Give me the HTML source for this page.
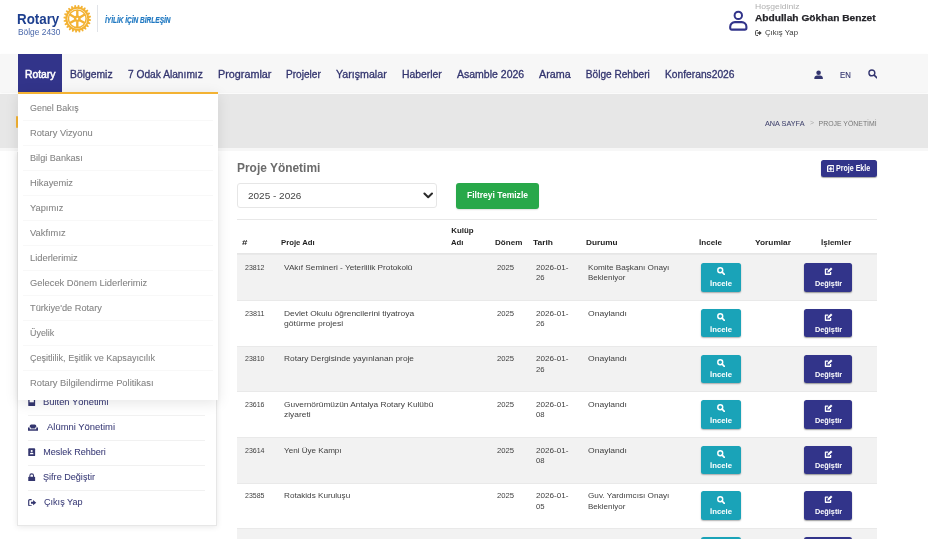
<!DOCTYPE html>
<html lang="tr"><head><meta charset="utf-8"><title>Proje Yönetimi</title>
<style>
html,body{margin:0;padding:0;}
body{width:928px;height:539px;overflow:hidden;background:#fff;position:relative;font-family:"Liberation Sans", sans-serif;}
.t{position:absolute;white-space:pre;z-index:5;transform-origin:0 50%;}
.sb{z-index:2;}
.b{position:absolute;}
#page{position:absolute;left:0;top:0;width:928px;height:539px;overflow:hidden;will-change:transform;}
</style></head>
<body>
<div id="page">
<div class="b" style="left:0px;top:54px;width:928px;height:38px;background:#f7f7f7;box-shadow:0 1px 2px rgba(0,0,0,.06);"></div>
<div class="b" style="left:0px;top:94px;width:928px;height:54px;background:#e7e7e7;"></div>
<div class="b" style="left:0px;top:148px;width:928px;height:3px;background:#f7f7f7;"></div>
<div class="b" style="left:18px;top:54px;width:44px;height:38px;background:#32348a;"></div>
<div class="b" style="left:16px;top:116px;width:2.2px;height:12px;background:#f3b233;border-radius:1px;"></div>
<svg class="b" style="left:0;top:0" width="120" height="45" viewBox="0 0 120 45">
<path d="M89.17,18.80 L91.08,19.45 L90.96,20.78 L88.95,21.05 L88.76,21.87 L90.45,23.00 L89.98,24.25 L87.97,23.99 L87.58,24.73 L88.91,26.26 L88.14,27.34 L86.26,26.58 L85.69,27.19 L86.59,29.01 L85.56,29.86 L83.95,28.63 L83.23,29.08 L83.63,31.06 L82.41,31.62 L81.17,30.02 L80.37,30.26 L80.24,32.28 L78.92,32.50 L78.14,30.64 L77.30,30.67 L76.65,32.58 L75.32,32.46 L75.05,30.45 L74.23,30.26 L73.10,31.95 L71.85,31.48 L72.11,29.47 L71.37,29.08 L69.84,30.41 L68.76,29.64 L69.52,27.76 L68.91,27.19 L67.09,28.09 L66.24,27.06 L67.47,25.45 L67.02,24.73 L65.04,25.13 L64.48,23.91 L66.08,22.67 L65.84,21.87 L63.82,21.74 L63.60,20.42 L65.46,19.64 L65.43,18.80 L63.52,18.15 L63.64,16.82 L65.65,16.55 L65.84,15.73 L64.15,14.60 L64.62,13.35 L66.63,13.61 L67.02,12.87 L65.69,11.34 L66.46,10.26 L68.34,11.02 L68.91,10.41 L68.01,8.59 L69.04,7.74 L70.65,8.97 L71.37,8.52 L70.97,6.54 L72.19,5.98 L73.43,7.58 L74.23,7.34 L74.36,5.32 L75.68,5.10 L76.46,6.96 L77.30,6.93 L77.95,5.02 L79.28,5.14 L79.55,7.15 L80.37,7.34 L81.50,5.65 L82.75,6.12 L82.49,8.13 L83.23,8.52 L84.76,7.19 L85.84,7.96 L85.08,9.84 L85.69,10.41 L87.51,9.51 L88.36,10.54 L87.13,12.15 L87.58,12.87 L89.56,12.47 L90.12,13.69 L88.52,14.93 L88.76,15.73 L90.78,15.86 L91.00,17.18 L89.14,17.96Z" fill="#f3b233"/>
<circle cx="77.3" cy="18.8" r="9.94" fill="#fff"/>
<circle cx="77.3" cy="18.8" r="8.83" fill="none" stroke="#f3b233" stroke-width="1.52"/>
<line x1="79.69" y1="20.18" x2="84.71" y2="23.08" stroke="#f3b233" stroke-width="2.35"/><line x1="77.30" y1="21.56" x2="77.30" y2="27.36" stroke="#f3b233" stroke-width="2.35"/><line x1="74.91" y1="20.18" x2="69.89" y2="23.08" stroke="#f3b233" stroke-width="2.35"/><line x1="74.91" y1="17.42" x2="69.89" y2="14.52" stroke="#f3b233" stroke-width="2.35"/><line x1="77.30" y1="16.04" x2="77.30" y2="10.24" stroke="#f3b233" stroke-width="2.35"/><line x1="79.69" y1="17.42" x2="84.71" y2="14.52" stroke="#f3b233" stroke-width="2.35"/>
<circle cx="77.3" cy="18.8" r="3.31" fill="#f3b233"/>
<circle cx="77.3" cy="18.8" r="0.97" fill="#fff"/>
</svg>
<div class="b" style="left:97.3px;top:4.8px;width:1px;height:27.4px;background:#e0e3e8;"></div>
<svg class="b" style="left:727px;top:9px;" width="24" height="24" viewBox="0 0 24 24"><circle cx="11.3" cy="6.4" r="3.7" fill="none" stroke="#32348a" stroke-width="2"/><path d="M3.2 19v-1.200c0-2.700 2.100-4.700 4.700-4.700h6.800c2.600 0 4.700 2 4.700 4.700v1.200c0 .9-.7 1.600-1.600 1.600H4.800c-.9 0-1.600-.7-1.600-1.600z" fill="none" stroke="#32348a" stroke-width="2.100" stroke-linejoin="round"/></svg>
<svg class="b" style="left:755.2px;top:30px;" width="7" height="6" viewBox="0 0 16 14"><path d="M6 1.2H3.2a2 2 0 0 0-2 2v7.6a2 2 0 0 0 2 2H6" fill="none" stroke="#3a3a3a" stroke-width="2.2" stroke-linecap="round"/><path d="M5.5 5h4V2l6 5-6 5V9h-4z" fill="#3a3a3a"/></svg>
<svg class="b" style="left:813.6px;top:69.8px;" width="9.2" height="9.4" viewBox="0 0 16 16"><circle cx="8" cy="4.6" r="4" fill="#33356f"/><path d="M0.6 16v-2.2c0-2.6 2.2-4.3 4.6-4.3h5.6c2.4 0 4.6 1.7 4.6 4.3V16z" fill="#33356f"/></svg>
<svg class="b" style="left:867.8px;top:69.3px;" width="9.6" height="9.6" viewBox="0 0 16 16"><circle cx="6.5" cy="6.5" r="4.9" fill="none" stroke="#33356f" stroke-width="2.4"/><line x1="10.3" y1="10.3" x2="14.6" y2="14.6" stroke="#33356f" stroke-width="2.8" stroke-linecap="round"/></svg>
<div class="b" style="left:16.8px;top:152px;width:198px;height:372px;background:#fff;z-index:1;border:1px solid #e7e7e7;box-shadow:0 1px 6px rgba(0,0,0,.09);"></div>
<div class="b" style="left:28px;top:415px;width:177px;height:1px;background:#f1f1f1;z-index:2;"></div>
<div class="b" style="left:28px;top:440px;width:177px;height:1px;background:#f1f1f1;z-index:2;"></div>
<div class="b" style="left:28px;top:465px;width:177px;height:1px;background:#f1f1f1;z-index:2;"></div>
<div class="b" style="left:28px;top:490px;width:177px;height:1px;background:#f1f1f1;z-index:2;"></div>
<svg class="b" style="left:28.2px;top:397.8px;z-index:2;" width="7.4" height="8.6" viewBox="0 0 14 16"><rect x="0.5" y="0.500" width="13" height="15" rx="1.500" fill="#34366f"/><rect x="3" y="3" width="8" height="5" fill="#fff"/></svg>
<svg class="b" style="left:28.2px;top:423.6px;z-index:2;" width="10" height="7.2" viewBox="0 0 20 14"><path d="M3.5 6V4a3 3 0 0 1 3-3h7a3 3 0 0 1 3 3v2a2.2 2.2 0 0 0-2 2.2V9h-9v-.8a2.2 2.2 0 0 0-2-2.2z" fill="#34366f"/><path d="M0 8.2a1.8 1.8 0 0 1 3.600 0V10.500h12.800V8.200a1.800 1.800 0 0 1 3.600 0V13.500h-20z" fill="#34366f"/></svg>
<svg class="b" style="left:28.2px;top:447.9px;z-index:2;" width="7.4" height="8.6" viewBox="0 0 14 16"><rect x="0.5" y="0.5" width="13" height="15" rx="1.5" fill="#34366f"/><circle cx="7" cy="5.6" r="2" fill="#fff"/><path d="M3.5 11.5c0-2 1.5-2.8 3.5-2.8s3.5.8 3.5 2.8z" fill="#fff"/></svg>
<svg class="b" style="left:28.2px;top:472.8px;z-index:2;" width="7.4" height="8.6" viewBox="0 0 14 16"><rect x="0.5" y="7" width="13" height="9" rx="1.5" fill="#34366f"/><path d="M3.5 7.5V5a3.5 3.5 0 0 1 7 0v2.5" fill="none" stroke="#34366f" stroke-width="2"/></svg>
<svg class="b" style="left:28.2px;top:498.6px;z-index:2;" width="8.6" height="7.4" viewBox="0 0 16 14"><path d="M6 1.2H3.2a2 2 0 0 0-2 2v7.6a2 2 0 0 0 2 2H6" fill="none" stroke="#34366f" stroke-width="2.2" stroke-linecap="round"/><path d="M5.5 5h4V2l6 5-6 5V9h-4z" fill="#34366f"/></svg>
<div class="b" style="left:18px;top:92px;width:200px;height:308px;background:#fff;z-index:3;border-top:2px solid #f3b233;box-sizing:border-box;box-shadow:0 3px 13px rgba(0,0,0,.10);"></div>
<div class="b" style="left:23px;top:120px;width:190px;height:1px;background:#f8f8f8;z-index:4;"></div>
<div class="b" style="left:23px;top:145px;width:190px;height:1px;background:#f8f8f8;z-index:4;"></div>
<div class="b" style="left:23px;top:170px;width:190px;height:1px;background:#f8f8f8;z-index:4;"></div>
<div class="b" style="left:23px;top:195px;width:190px;height:1px;background:#f8f8f8;z-index:4;"></div>
<div class="b" style="left:23px;top:220px;width:190px;height:1px;background:#f8f8f8;z-index:4;"></div>
<div class="b" style="left:23px;top:245px;width:190px;height:1px;background:#f8f8f8;z-index:4;"></div>
<div class="b" style="left:23px;top:270px;width:190px;height:1px;background:#f8f8f8;z-index:4;"></div>
<div class="b" style="left:23px;top:295px;width:190px;height:1px;background:#f8f8f8;z-index:4;"></div>
<div class="b" style="left:23px;top:320px;width:190px;height:1px;background:#f8f8f8;z-index:4;"></div>
<div class="b" style="left:23px;top:345px;width:190px;height:1px;background:#f8f8f8;z-index:4;"></div>
<div class="b" style="left:23px;top:370px;width:190px;height:1px;background:#f8f8f8;z-index:4;"></div>
<div class="b" style="left:237px;top:183px;width:200px;height:25px;background:#fff;box-sizing:border-box;border:1px solid #e6e6e6;border-radius:3px;"></div>
<svg class="b" style="left:422.8px;top:192.4px;" width="10.4" height="7.6" viewBox="0 0 11 8"><path d="M1.500 1.600l4 4 4-4" fill="none" stroke="#2a2a2a" stroke-width="2.100" stroke-linecap="round" stroke-linejoin="round"/></svg>
<div class="b" style="left:456px;top:183px;width:83px;height:26px;background:#28a84a;border-radius:3px;box-shadow:0 1px 1.500px rgba(0,0,0,.12);"></div>
<div class="b" style="left:821.2px;top:160px;width:55.6px;height:17px;background:#32348a;border-radius:2.500px;box-shadow:0 1px 1px rgba(0,0,0,.35);"></div>
<svg class="b" style="left:826.8px;top:164.7px;" width="7.6" height="7.6" viewBox="0 0 16 16"><rect x="1.4" y="1.4" width="13.200" height="13.200" rx="2" fill="none" stroke="#fff" stroke-width="2.800"/><path d="M8 4v8M4 8h8" stroke="#fff" stroke-width="2.600"/></svg>
<div class="b" style="left:236.7px;top:219.4px;width:640px;height:1px;background:#e8e8e8;"></div>
<div class="b" style="left:236.7px;top:253.3px;width:640px;height:1px;background:#e6e6e6;"></div>
<div class="b" style="left:236.7px;top:254.30px;width:640px;height:45.65px;background:#f2f2f2;"></div>
<div class="b" style="left:236.7px;top:254.30px;width:640px;height:0.8px;background:#e9e9e9;"></div>
<div class="b" style="left:701.2px;top:263.20px;width:39.5px;height:28.6px;background:#1aa3b8;border-radius:2.500px;box-shadow:0 1px 1.500px rgba(0,0,0,.3);"></div>
<svg class="b" style="left:717.3px;top:267.30px;" width="8" height="8" viewBox="0 0 16 16"><circle cx="6.5" cy="6.5" r="4.9" fill="none" stroke="#fff" stroke-width="2.9"/><line x1="10.3" y1="10.3" x2="14.6" y2="14.6" stroke="#fff" stroke-width="3.3" stroke-linecap="round"/></svg>
<div class="b" style="left:804px;top:263.20px;width:47.6px;height:28.6px;background:#32348a;border-radius:2.500px;box-shadow:0 1px 1.500px rgba(0,0,0,.4);"></div>
<svg class="b" style="left:823.8px;top:267.20px;" width="9" height="8.4" viewBox="0 0 16 16"><path d="M12 9.500v4.300h-9.800v-9.800H7.500" fill="none" stroke="#fff" stroke-width="2.500" stroke-linejoin="round"/><path d="M5.800 10.600l.6-3.300 6.400-6.400 2.700 2.700-6.400 6.400z" fill="#fff"/></svg>
<div class="b" style="left:236.7px;top:299.95px;width:640px;height:0.8px;background:#e9e9e9;"></div>
<div class="b" style="left:701.2px;top:308.85px;width:39.5px;height:28.6px;background:#1aa3b8;border-radius:2.500px;box-shadow:0 1px 1.500px rgba(0,0,0,.3);"></div>
<svg class="b" style="left:717.3px;top:312.95px;" width="8" height="8" viewBox="0 0 16 16"><circle cx="6.5" cy="6.5" r="4.9" fill="none" stroke="#fff" stroke-width="2.9"/><line x1="10.3" y1="10.3" x2="14.6" y2="14.6" stroke="#fff" stroke-width="3.3" stroke-linecap="round"/></svg>
<div class="b" style="left:804px;top:308.85px;width:47.6px;height:28.6px;background:#32348a;border-radius:2.500px;box-shadow:0 1px 1.500px rgba(0,0,0,.4);"></div>
<svg class="b" style="left:823.8px;top:312.85px;" width="9" height="8.4" viewBox="0 0 16 16"><path d="M12 9.500v4.300h-9.800v-9.800H7.500" fill="none" stroke="#fff" stroke-width="2.500" stroke-linejoin="round"/><path d="M5.800 10.600l.6-3.300 6.400-6.400 2.700 2.700-6.400 6.400z" fill="#fff"/></svg>
<div class="b" style="left:236.7px;top:345.60px;width:640px;height:45.65px;background:#f2f2f2;"></div>
<div class="b" style="left:236.7px;top:345.60px;width:640px;height:0.8px;background:#e9e9e9;"></div>
<div class="b" style="left:701.2px;top:354.50px;width:39.5px;height:28.6px;background:#1aa3b8;border-radius:2.500px;box-shadow:0 1px 1.500px rgba(0,0,0,.3);"></div>
<svg class="b" style="left:717.3px;top:358.60px;" width="8" height="8" viewBox="0 0 16 16"><circle cx="6.5" cy="6.5" r="4.9" fill="none" stroke="#fff" stroke-width="2.9"/><line x1="10.3" y1="10.3" x2="14.6" y2="14.6" stroke="#fff" stroke-width="3.3" stroke-linecap="round"/></svg>
<div class="b" style="left:804px;top:354.50px;width:47.6px;height:28.6px;background:#32348a;border-radius:2.500px;box-shadow:0 1px 1.500px rgba(0,0,0,.4);"></div>
<svg class="b" style="left:823.8px;top:358.50px;" width="9" height="8.4" viewBox="0 0 16 16"><path d="M12 9.500v4.300h-9.800v-9.800H7.500" fill="none" stroke="#fff" stroke-width="2.500" stroke-linejoin="round"/><path d="M5.800 10.600l.6-3.300 6.400-6.400 2.700 2.700-6.400 6.400z" fill="#fff"/></svg>
<div class="b" style="left:236.7px;top:391.25px;width:640px;height:0.8px;background:#e9e9e9;"></div>
<div class="b" style="left:701.2px;top:400.15px;width:39.5px;height:28.6px;background:#1aa3b8;border-radius:2.500px;box-shadow:0 1px 1.500px rgba(0,0,0,.3);"></div>
<svg class="b" style="left:717.3px;top:404.25px;" width="8" height="8" viewBox="0 0 16 16"><circle cx="6.5" cy="6.5" r="4.9" fill="none" stroke="#fff" stroke-width="2.9"/><line x1="10.3" y1="10.3" x2="14.6" y2="14.6" stroke="#fff" stroke-width="3.3" stroke-linecap="round"/></svg>
<div class="b" style="left:804px;top:400.15px;width:47.6px;height:28.6px;background:#32348a;border-radius:2.500px;box-shadow:0 1px 1.500px rgba(0,0,0,.4);"></div>
<svg class="b" style="left:823.8px;top:404.15px;" width="9" height="8.4" viewBox="0 0 16 16"><path d="M12 9.500v4.300h-9.800v-9.800H7.500" fill="none" stroke="#fff" stroke-width="2.500" stroke-linejoin="round"/><path d="M5.800 10.600l.6-3.300 6.400-6.400 2.700 2.700-6.400 6.400z" fill="#fff"/></svg>
<div class="b" style="left:236.7px;top:436.90px;width:640px;height:45.65px;background:#f2f2f2;"></div>
<div class="b" style="left:236.7px;top:436.90px;width:640px;height:0.8px;background:#e9e9e9;"></div>
<div class="b" style="left:701.2px;top:445.80px;width:39.5px;height:28.6px;background:#1aa3b8;border-radius:2.500px;box-shadow:0 1px 1.500px rgba(0,0,0,.3);"></div>
<svg class="b" style="left:717.3px;top:449.90px;" width="8" height="8" viewBox="0 0 16 16"><circle cx="6.5" cy="6.5" r="4.9" fill="none" stroke="#fff" stroke-width="2.9"/><line x1="10.3" y1="10.3" x2="14.6" y2="14.6" stroke="#fff" stroke-width="3.3" stroke-linecap="round"/></svg>
<div class="b" style="left:804px;top:445.80px;width:47.6px;height:28.6px;background:#32348a;border-radius:2.500px;box-shadow:0 1px 1.500px rgba(0,0,0,.4);"></div>
<svg class="b" style="left:823.8px;top:449.80px;" width="9" height="8.4" viewBox="0 0 16 16"><path d="M12 9.500v4.300h-9.800v-9.800H7.500" fill="none" stroke="#fff" stroke-width="2.500" stroke-linejoin="round"/><path d="M5.800 10.600l.6-3.300 6.400-6.400 2.700 2.700-6.400 6.400z" fill="#fff"/></svg>
<div class="b" style="left:236.7px;top:482.55px;width:640px;height:0.8px;background:#e9e9e9;"></div>
<div class="b" style="left:701.2px;top:491.45px;width:39.5px;height:28.6px;background:#1aa3b8;border-radius:2.500px;box-shadow:0 1px 1.500px rgba(0,0,0,.3);"></div>
<svg class="b" style="left:717.3px;top:495.55px;" width="8" height="8" viewBox="0 0 16 16"><circle cx="6.5" cy="6.5" r="4.9" fill="none" stroke="#fff" stroke-width="2.9"/><line x1="10.3" y1="10.3" x2="14.6" y2="14.6" stroke="#fff" stroke-width="3.3" stroke-linecap="round"/></svg>
<div class="b" style="left:804px;top:491.45px;width:47.6px;height:28.6px;background:#32348a;border-radius:2.500px;box-shadow:0 1px 1.500px rgba(0,0,0,.4);"></div>
<svg class="b" style="left:823.8px;top:495.45px;" width="9" height="8.4" viewBox="0 0 16 16"><path d="M12 9.500v4.300h-9.800v-9.800H7.500" fill="none" stroke="#fff" stroke-width="2.500" stroke-linejoin="round"/><path d="M5.800 10.600l.6-3.300 6.400-6.400 2.700 2.700-6.400 6.400z" fill="#fff"/></svg>
<div class="b" style="left:236.7px;top:528.20px;width:640px;height:45.65px;background:#f2f2f2;"></div>
<div class="b" style="left:236.7px;top:528.20px;width:640px;height:0.8px;background:#e9e9e9;"></div>
<div class="b" style="left:701.2px;top:537.10px;width:39.5px;height:28.6px;background:#1aa3b8;border-radius:2.500px;box-shadow:0 1px 1.500px rgba(0,0,0,.3);"></div>
<svg class="b" style="left:717.3px;top:541.20px;" width="8" height="8" viewBox="0 0 16 16"><circle cx="6.5" cy="6.5" r="4.9" fill="none" stroke="#fff" stroke-width="2.9"/><line x1="10.3" y1="10.3" x2="14.6" y2="14.6" stroke="#fff" stroke-width="3.3" stroke-linecap="round"/></svg>
<div class="b" style="left:804px;top:537.10px;width:47.6px;height:28.6px;background:#32348a;border-radius:2.500px;box-shadow:0 1px 1.500px rgba(0,0,0,.4);"></div>
<svg class="b" style="left:823.8px;top:541.10px;" width="9" height="8.4" viewBox="0 0 16 16"><path d="M12 9.500v4.300h-9.800v-9.800H7.500" fill="none" stroke="#fff" stroke-width="2.500" stroke-linejoin="round"/><path d="M5.800 10.600l.6-3.300 6.400-6.400 2.700 2.700-6.400 6.400z" fill="#fff"/></svg>
<span class="t " id="t0" style="left:17.20px;top:9.90px;font-size:14.6px;line-height:19.0px;color:#1d3f8f;font-weight:700;transform:scaleX(0.9149);">Rotary</span>
<span class="t " id="t1" style="left:17.60px;top:26.70px;font-size:8.8px;line-height:11.4px;color:#4a68ab;transform:scaleX(0.9525);">Bölge 2430</span>
<span class="t " id="t2" style="left:104.70px;top:14.65px;font-size:8.4px;line-height:10.9px;color:#1f78c1;font-weight:700;font-style:italic;-webkit-text-stroke:0.2px #1f78c1;transform:scaleX(0.7776);">İYİLİK İÇİN BİRLEŞİN</span>
<span class="t " id="t3" style="left:755.40px;top:2.35px;font-size:7.8px;line-height:10.1px;color:#b0b0b0;letter-spacing:0.023px;transform:scaleX(1.1000);">Hoşgeldiniz</span>
<span class="t " id="t4" style="left:755.40px;top:12.05px;font-size:9.9px;line-height:12.9px;color:#26262b;font-weight:700;-webkit-text-stroke:0.25px #26262b;transform:scaleX(1.0319);">Abdullah Gökhan Benzet</span>
<span class="t " id="t5" style="left:764.90px;top:28.10px;font-size:7.5px;line-height:9.8px;color:#3a3a3a;transform:scaleX(1.0368);">Çıkış Yap</span>
<span class="t " id="t6" style="left:24.60px;top:67.95px;font-size:10.1px;line-height:13.1px;color:#fff;-webkit-text-stroke:0.5px #fff;transform:scaleX(1.0224);">Rotary</span>
<span class="t " id="t7" style="left:70.00px;top:67.95px;font-size:10.1px;line-height:13.1px;color:#33356f;-webkit-text-stroke:0.3px #33356f;transform:scaleX(1.0261);">Bölgemiz</span>
<span class="t " id="t8" style="left:127.80px;top:67.95px;font-size:10.1px;line-height:13.1px;color:#33356f;-webkit-text-stroke:0.3px #33356f;transform:scaleX(1.0100);">7 Odak Alanımız</span>
<span class="t " id="t9" style="left:217.50px;top:67.95px;font-size:10.1px;line-height:13.1px;color:#33356f;-webkit-text-stroke:0.3px #33356f;transform:scaleX(1.0697);">Programlar</span>
<span class="t " id="t10" style="left:286.00px;top:67.95px;font-size:10.1px;line-height:13.1px;color:#33356f;-webkit-text-stroke:0.3px #33356f;">Projeler</span>
<span class="t " id="t11" style="left:335.80px;top:67.95px;font-size:10.1px;line-height:13.1px;color:#33356f;-webkit-text-stroke:0.3px #33356f;transform:scaleX(1.0549);">Yarışmalar</span>
<span class="t " id="t12" style="left:401.60px;top:67.95px;font-size:10.1px;line-height:13.1px;color:#33356f;-webkit-text-stroke:0.3px #33356f;transform:scaleX(1.0279);">Haberler</span>
<span class="t " id="t13" style="left:456.50px;top:67.95px;font-size:10.1px;line-height:13.1px;color:#33356f;-webkit-text-stroke:0.3px #33356f;transform:scaleX(1.0414);">Asamble 2026</span>
<span class="t " id="t14" style="left:538.90px;top:67.95px;font-size:10.1px;line-height:13.1px;color:#33356f;-webkit-text-stroke:0.3px #33356f;transform:scaleX(1.0661);">Arama</span>
<span class="t " id="t15" style="left:585.80px;top:67.95px;font-size:10.1px;line-height:13.1px;color:#33356f;-webkit-text-stroke:0.3px #33356f;">Bölge Rehberi</span>
<span class="t " id="t16" style="left:665.00px;top:67.95px;font-size:10.1px;line-height:13.1px;color:#33356f;-webkit-text-stroke:0.3px #33356f;transform:scaleX(1.0151);">Konferans2026</span>
<span class="t " id="t17" style="left:839.80px;top:69.05px;font-size:9.6px;line-height:12.5px;color:#33356f;-webkit-text-stroke:0.15px #33356f;transform:scaleX(0.8103);">EN</span>
<span class="t " id="t18" style="left:765.00px;top:118.90px;font-size:6.9px;line-height:9.0px;color:#43456f;-webkit-text-stroke:0.05px #43456f;transform:scaleX(1.0560);">ANA SAYFA</span>
<span class="t " id="t19" style="left:809.60px;top:119.15px;font-size:6.5px;line-height:8.5px;color:#aaa;transform:scaleX(1.0535);">&gt;</span>
<span class="t " id="t20" style="left:818.60px;top:118.90px;font-size:6.9px;line-height:9.0px;color:#777;">PROJE YÖNETİMİ</span>
<span class="t dd" id="t21" style="left:29.70px;top:102.90px;font-size:8.9px;line-height:11.6px;color:#848484;-webkit-text-stroke:0.08px #848484;transform:scaleX(1.0050);">Genel Bakış</span>
<span class="t dd" id="t22" style="left:29.70px;top:127.90px;font-size:8.9px;line-height:11.6px;color:#848484;-webkit-text-stroke:0.08px #848484;transform:scaleX(1.0445);">Rotary Vizyonu</span>
<span class="t dd" id="t23" style="left:29.70px;top:152.90px;font-size:8.9px;line-height:11.6px;color:#848484;-webkit-text-stroke:0.08px #848484;transform:scaleX(1.0270);">Bilgi Bankası</span>
<span class="t dd" id="t24" style="left:29.70px;top:177.90px;font-size:8.9px;line-height:11.6px;color:#848484;-webkit-text-stroke:0.08px #848484;transform:scaleX(1.0504);">Hikayemiz</span>
<span class="t dd" id="t25" style="left:29.70px;top:202.90px;font-size:8.9px;line-height:11.6px;color:#848484;-webkit-text-stroke:0.08px #848484;transform:scaleX(1.0468);">Yapımız</span>
<span class="t dd" id="t26" style="left:29.70px;top:227.90px;font-size:8.9px;line-height:11.6px;color:#848484;-webkit-text-stroke:0.08px #848484;transform:scaleX(1.0539);">Vakfımız</span>
<span class="t dd" id="t27" style="left:29.70px;top:252.90px;font-size:8.9px;line-height:11.6px;color:#848484;-webkit-text-stroke:0.08px #848484;transform:scaleX(1.0534);">Liderlerimiz</span>
<span class="t dd" id="t28" style="left:29.70px;top:277.90px;font-size:8.9px;line-height:11.6px;color:#848484;-webkit-text-stroke:0.08px #848484;transform:scaleX(1.0522);">Gelecek Dönem Liderlerimiz</span>
<span class="t dd" id="t29" style="left:29.70px;top:302.90px;font-size:8.9px;line-height:11.6px;color:#848484;-webkit-text-stroke:0.08px #848484;transform:scaleX(1.0378);">Türkiye'de Rotary</span>
<span class="t dd" id="t30" style="left:29.70px;top:327.90px;font-size:8.9px;line-height:11.6px;color:#848484;-webkit-text-stroke:0.08px #848484;transform:scaleX(1.0053);">Üyelik</span>
<span class="t dd" id="t31" style="left:29.70px;top:352.90px;font-size:8.9px;line-height:11.6px;color:#848484;-webkit-text-stroke:0.08px #848484;transform:scaleX(1.0178);">Çeşitlilik, Eşitlik ve Kapsayıcılık</span>
<span class="t dd" id="t32" style="left:29.70px;top:377.90px;font-size:8.9px;line-height:11.6px;color:#848484;-webkit-text-stroke:0.08px #848484;transform:scaleX(1.0520);">Rotary Bilgilendirme Politikası</span>
<span class="t sb" id="t33" style="left:43.20px;top:397.35px;font-size:9.0px;line-height:11.7px;color:#383a76;-webkit-text-stroke:0.05px #383a76;transform:scaleX(1.0417);">Bülten Yönetimi</span>
<span class="t sb" id="t34" style="left:46.50px;top:422.35px;font-size:9.0px;line-height:11.7px;color:#383a76;-webkit-text-stroke:0.05px #383a76;transform:scaleX(1.0482);">Alümni Yönetimi</span>
<span class="t sb" id="t35" style="left:43.20px;top:447.35px;font-size:9.0px;line-height:11.7px;color:#383a76;-webkit-text-stroke:0.05px #383a76;">Meslek Rehberi</span>
<span class="t sb" id="t36" style="left:43.20px;top:472.35px;font-size:9.0px;line-height:11.7px;color:#383a76;-webkit-text-stroke:0.05px #383a76;transform:scaleX(1.0094);">Şifre Değiştir</span>
<span class="t sb" id="t37" style="left:44.00px;top:497.35px;font-size:9.0px;line-height:11.7px;color:#383a76;-webkit-text-stroke:0.05px #383a76;transform:scaleX(1.0082);">Çıkış Yap</span>
<span class="t " id="t38" style="left:236.70px;top:160.45px;font-size:12.4px;line-height:16.1px;color:#6b6b6b;font-weight:700;transform:scaleX(0.9627);">Proje Yönetimi</span>
<span class="t " id="t39" style="left:247.60px;top:190.15px;font-size:9.6px;line-height:12.5px;color:#444;transform:scaleX(1.0406);">2025 - 2026</span>
<span class="t " id="t40" style="left:467.00px;top:190.00px;font-size:8.3px;line-height:10.8px;color:#fff;font-weight:700;transform:scaleX(1.0282);">Filtreyi Temizle</span>
<span class="t " id="t41" style="left:836.00px;top:163.65px;font-size:8.2px;line-height:10.7px;color:#fff;font-weight:700;transform:scaleX(0.8634);">Proje Ekle</span>
<span class="t " id="t42" style="left:242.40px;top:238.05px;font-size:7.9px;line-height:10.3px;color:#1f1f1f;font-weight:700;transform:scaleX(1.2299);">#</span>
<span class="t " id="t43" style="left:280.90px;top:238.05px;font-size:7.9px;line-height:10.3px;color:#1f1f1f;font-weight:700;transform:scaleX(0.9808);">Proje Adı</span>
<span class="t " id="t44" style="left:451.20px;top:225.85px;font-size:7.9px;line-height:10.3px;color:#1f1f1f;font-weight:700;">Kulüp</span>
<span class="t " id="t45" style="left:451.20px;top:238.05px;font-size:7.9px;line-height:10.3px;color:#1f1f1f;font-weight:700;transform:scaleX(0.9828);">Adı</span>
<span class="t " id="t46" style="left:495.00px;top:238.05px;font-size:7.9px;line-height:10.3px;color:#1f1f1f;font-weight:700;transform:scaleX(1.0206);">Dönem</span>
<span class="t " id="t47" style="left:533.00px;top:238.05px;font-size:7.9px;line-height:10.3px;color:#1f1f1f;font-weight:700;transform:scaleX(1.0684);">Tarih</span>
<span class="t " id="t48" style="left:585.60px;top:238.05px;font-size:7.9px;line-height:10.3px;color:#1f1f1f;font-weight:700;transform:scaleX(1.0413);">Durumu</span>
<span class="t " id="t49" style="left:698.50px;top:238.05px;font-size:7.9px;line-height:10.3px;color:#1f1f1f;font-weight:700;transform:scaleX(1.0279);">İncele</span>
<span class="t " id="t50" style="left:755.00px;top:238.05px;font-size:7.9px;line-height:10.3px;color:#1f1f1f;font-weight:700;transform:scaleX(1.0569);">Yorumlar</span>
<span class="t " id="t51" style="left:821.30px;top:238.05px;font-size:7.9px;line-height:10.3px;color:#1f1f1f;font-weight:700;transform:scaleX(1.0153);">İşlemler</span>
<span class="t " id="t52" style="left:245.00px;top:263.05px;font-size:7.95px;line-height:10.3px;color:#3f3f3f;transform:scaleX(0.8832);">23812</span>
<span class="t " id="t53" style="left:283.50px;top:263.05px;font-size:7.95px;line-height:10.3px;color:#3f3f3f;transform:scaleX(1.0369);">VAkıf Semineri - Yeterlilik Protokolü</span>
<span class="t " id="t54" style="left:497.40px;top:263.05px;font-size:7.95px;line-height:10.3px;color:#3f3f3f;transform:scaleX(0.9676);">2025</span>
<span class="t " id="t55" style="left:535.80px;top:263.05px;font-size:7.95px;line-height:10.3px;color:#3f3f3f;transform:scaleX(1.0226);">2026-01-</span>
<span class="t " id="t56" style="left:535.80px;top:273.25px;font-size:7.95px;line-height:10.3px;color:#3f3f3f;transform:scaleX(0.9724);">26</span>
<span class="t " id="t57" style="left:588.20px;top:263.05px;font-size:7.95px;line-height:10.3px;color:#3f3f3f;transform:scaleX(1.0306);">Komite Başkanı Onayı</span>
<span class="t " id="t58" style="left:588.20px;top:273.25px;font-size:7.95px;line-height:10.3px;color:#3f3f3f;transform:scaleX(1.0064);">Bekleniyor</span>
<span class="t " id="t59" style="left:710.40px;top:278.85px;font-size:8.1px;line-height:10.5px;color:#fff;font-weight:700;transform:scaleX(0.9585);">İncele</span>
<span class="t " id="t60" style="left:815.00px;top:278.85px;font-size:8.1px;line-height:10.5px;color:#fff;font-weight:700;transform:scaleX(0.9024);">Değiştir</span>
<span class="t " id="t61" style="left:245.00px;top:308.70px;font-size:7.95px;line-height:10.3px;color:#3f3f3f;transform:scaleX(0.9076);">23811</span>
<span class="t " id="t62" style="left:283.50px;top:308.70px;font-size:7.95px;line-height:10.3px;color:#3f3f3f;transform:scaleX(1.0607);">Devlet Okulu öğrencilerini tiyatroya</span>
<span class="t " id="t63" style="left:283.50px;top:318.90px;font-size:7.95px;line-height:10.3px;color:#3f3f3f;transform:scaleX(1.0819);">götürme projesi</span>
<span class="t " id="t64" style="left:497.40px;top:308.70px;font-size:7.95px;line-height:10.3px;color:#3f3f3f;transform:scaleX(0.9676);">2025</span>
<span class="t " id="t65" style="left:535.80px;top:308.70px;font-size:7.95px;line-height:10.3px;color:#3f3f3f;transform:scaleX(1.0226);">2026-01-</span>
<span class="t " id="t66" style="left:535.80px;top:318.90px;font-size:7.95px;line-height:10.3px;color:#3f3f3f;transform:scaleX(0.9724);">26</span>
<span class="t " id="t67" style="left:588.20px;top:308.70px;font-size:7.95px;line-height:10.3px;color:#3f3f3f;transform:scaleX(1.0777);">Onaylandı</span>
<span class="t " id="t68" style="left:710.40px;top:324.50px;font-size:8.1px;line-height:10.5px;color:#fff;font-weight:700;transform:scaleX(0.9585);">İncele</span>
<span class="t " id="t69" style="left:815.00px;top:324.50px;font-size:8.1px;line-height:10.5px;color:#fff;font-weight:700;transform:scaleX(0.9024);">Değiştir</span>
<span class="t " id="t70" style="left:245.00px;top:354.35px;font-size:7.95px;line-height:10.3px;color:#3f3f3f;transform:scaleX(0.8832);">23810</span>
<span class="t " id="t71" style="left:283.50px;top:354.35px;font-size:7.95px;line-height:10.3px;color:#3f3f3f;transform:scaleX(1.0485);">Rotary Dergisinde yayınlanan proje</span>
<span class="t " id="t72" style="left:497.40px;top:354.35px;font-size:7.95px;line-height:10.3px;color:#3f3f3f;transform:scaleX(0.9676);">2025</span>
<span class="t " id="t73" style="left:535.80px;top:354.35px;font-size:7.95px;line-height:10.3px;color:#3f3f3f;transform:scaleX(1.0226);">2026-01-</span>
<span class="t " id="t74" style="left:535.80px;top:364.55px;font-size:7.95px;line-height:10.3px;color:#3f3f3f;transform:scaleX(0.9724);">26</span>
<span class="t " id="t75" style="left:588.20px;top:354.35px;font-size:7.95px;line-height:10.3px;color:#3f3f3f;transform:scaleX(1.0777);">Onaylandı</span>
<span class="t " id="t76" style="left:710.40px;top:370.15px;font-size:8.1px;line-height:10.5px;color:#fff;font-weight:700;transform:scaleX(0.9585);">İncele</span>
<span class="t " id="t77" style="left:815.00px;top:370.15px;font-size:8.1px;line-height:10.5px;color:#fff;font-weight:700;transform:scaleX(0.9024);">Değiştir</span>
<span class="t " id="t78" style="left:245.00px;top:400.00px;font-size:7.95px;line-height:10.3px;color:#3f3f3f;transform:scaleX(0.8832);">23616</span>
<span class="t " id="t79" style="left:283.50px;top:400.00px;font-size:7.95px;line-height:10.3px;color:#3f3f3f;transform:scaleX(1.0508);">Guvernörümüzün Antalya Rotary Kulübü</span>
<span class="t " id="t80" style="left:283.50px;top:410.20px;font-size:7.95px;line-height:10.3px;color:#3f3f3f;transform:scaleX(1.0574);">ziyareti</span>
<span class="t " id="t81" style="left:497.40px;top:400.00px;font-size:7.95px;line-height:10.3px;color:#3f3f3f;transform:scaleX(0.9676);">2025</span>
<span class="t " id="t82" style="left:535.80px;top:400.00px;font-size:7.95px;line-height:10.3px;color:#3f3f3f;transform:scaleX(1.0226);">2026-01-</span>
<span class="t " id="t83" style="left:535.80px;top:410.20px;font-size:7.95px;line-height:10.3px;color:#3f3f3f;transform:scaleX(0.9724);">08</span>
<span class="t " id="t84" style="left:588.20px;top:400.00px;font-size:7.95px;line-height:10.3px;color:#3f3f3f;transform:scaleX(1.0777);">Onaylandı</span>
<span class="t " id="t85" style="left:710.40px;top:415.80px;font-size:8.1px;line-height:10.5px;color:#fff;font-weight:700;transform:scaleX(0.9585);">İncele</span>
<span class="t " id="t86" style="left:815.00px;top:415.80px;font-size:8.1px;line-height:10.5px;color:#fff;font-weight:700;transform:scaleX(0.9024);">Değiştir</span>
<span class="t " id="t87" style="left:245.00px;top:445.65px;font-size:7.95px;line-height:10.3px;color:#3f3f3f;transform:scaleX(0.8832);">23614</span>
<span class="t " id="t88" style="left:283.50px;top:445.65px;font-size:7.95px;line-height:10.3px;color:#3f3f3f;transform:scaleX(1.0172);">Yeni Üye Kampı</span>
<span class="t " id="t89" style="left:497.40px;top:445.65px;font-size:7.95px;line-height:10.3px;color:#3f3f3f;transform:scaleX(0.9676);">2025</span>
<span class="t " id="t90" style="left:535.80px;top:445.65px;font-size:7.95px;line-height:10.3px;color:#3f3f3f;transform:scaleX(1.0226);">2026-01-</span>
<span class="t " id="t91" style="left:535.80px;top:455.85px;font-size:7.95px;line-height:10.3px;color:#3f3f3f;transform:scaleX(0.9724);">08</span>
<span class="t " id="t92" style="left:588.20px;top:445.65px;font-size:7.95px;line-height:10.3px;color:#3f3f3f;transform:scaleX(1.0777);">Onaylandı</span>
<span class="t " id="t93" style="left:710.40px;top:461.45px;font-size:8.1px;line-height:10.5px;color:#fff;font-weight:700;transform:scaleX(0.9585);">İncele</span>
<span class="t " id="t94" style="left:815.00px;top:461.45px;font-size:8.1px;line-height:10.5px;color:#fff;font-weight:700;transform:scaleX(0.9024);">Değiştir</span>
<span class="t " id="t95" style="left:245.00px;top:491.30px;font-size:7.95px;line-height:10.3px;color:#3f3f3f;transform:scaleX(0.8832);">23585</span>
<span class="t " id="t96" style="left:283.50px;top:491.30px;font-size:7.95px;line-height:10.3px;color:#3f3f3f;transform:scaleX(1.0276);">Rotakids Kuruluşu</span>
<span class="t " id="t97" style="left:497.40px;top:491.30px;font-size:7.95px;line-height:10.3px;color:#3f3f3f;transform:scaleX(0.9676);">2025</span>
<span class="t " id="t98" style="left:535.80px;top:491.30px;font-size:7.95px;line-height:10.3px;color:#3f3f3f;transform:scaleX(1.0226);">2026-01-</span>
<span class="t " id="t99" style="left:535.80px;top:501.50px;font-size:7.95px;line-height:10.3px;color:#3f3f3f;transform:scaleX(0.9724);">05</span>
<span class="t " id="t100" style="left:588.20px;top:491.30px;font-size:7.95px;line-height:10.3px;color:#3f3f3f;transform:scaleX(1.0308);">Guv. Yardımcısı Onayı</span>
<span class="t " id="t101" style="left:588.20px;top:501.50px;font-size:7.95px;line-height:10.3px;color:#3f3f3f;transform:scaleX(1.0064);">Bekleniyor</span>
<span class="t " id="t102" style="left:710.40px;top:507.10px;font-size:8.1px;line-height:10.5px;color:#fff;font-weight:700;transform:scaleX(0.9585);">İncele</span>
<span class="t " id="t103" style="left:815.00px;top:507.10px;font-size:8.1px;line-height:10.5px;color:#fff;font-weight:700;transform:scaleX(0.9024);">Değiştir</span>
<span class="t " id="t104" style="left:245.00px;top:536.95px;font-size:7.95px;line-height:10.3px;color:#3f3f3f;transform:scaleX(0.8832);">23583</span>
<span class="t " id="t105" style="left:283.50px;top:536.95px;font-size:7.95px;line-height:10.3px;color:#3f3f3f;transform:scaleX(1.0793);">Guvernörümüzün Kulüp ziyareti</span>
<span class="t " id="t106" style="left:497.40px;top:536.95px;font-size:7.95px;line-height:10.3px;color:#3f3f3f;transform:scaleX(0.9676);">2025</span>
<span class="t " id="t107" style="left:535.80px;top:536.95px;font-size:7.95px;line-height:10.3px;color:#3f3f3f;transform:scaleX(1.0226);">2025-12-</span>
<span class="t " id="t108" style="left:535.80px;top:547.15px;font-size:7.95px;line-height:10.3px;color:#3f3f3f;transform:scaleX(0.9724);">22</span>
<span class="t " id="t109" style="left:588.20px;top:536.95px;font-size:7.95px;line-height:10.3px;color:#3f3f3f;transform:scaleX(1.0308);">Guv. Yardımcısı Onayı</span>
<span class="t " id="t110" style="left:710.40px;top:552.75px;font-size:8.1px;line-height:10.5px;color:#fff;font-weight:700;transform:scaleX(0.9585);">İncele</span>
<span class="t " id="t111" style="left:815.00px;top:552.75px;font-size:8.1px;line-height:10.5px;color:#fff;font-weight:700;transform:scaleX(0.9024);">Değiştir</span>
</div>
</body></html>
